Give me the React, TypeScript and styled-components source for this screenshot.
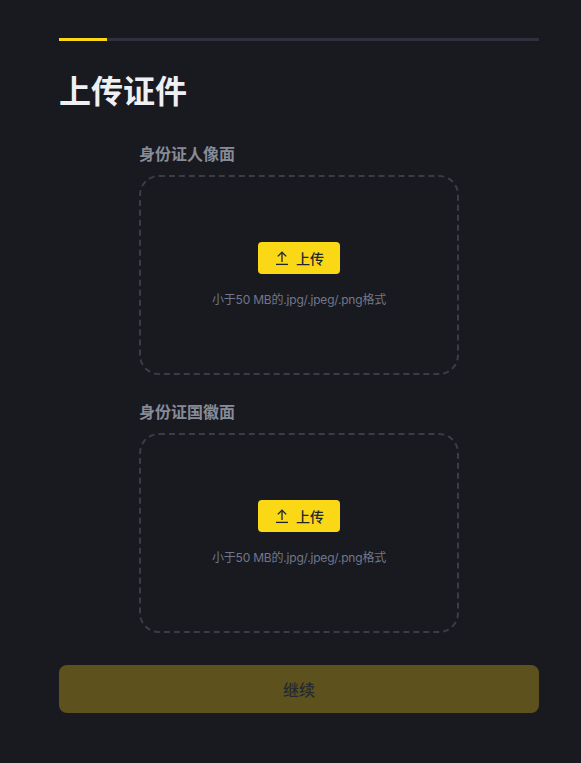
import React from "react"
import styled, { createGlobalStyle } from "styled-components"

const GlobalStyle = createGlobalStyle`
  * {
    box-sizing: border-box;
  }

  body {
    margin: 0;
    background: #191a20;
    font-family: Inter, "Noto Sans CJK SC", sans-serif;
  }
`

const Page = styled.div`
  width: 581px;
  height: 763px;
  padding: 38px 42px 0 59px;
  background: #191a20;
`

const Progress = styled.div`
  height: 3px;
  background: #2e313d;
`

const ProgressFill = styled.div`
  width: 48px;
  height: 100%;
  background: #fad816;
`

const Title = styled.h1`
  margin: 29px 0 0;
  height: 44px;
  font-size: 32px;
  line-height: 44px;
  font-weight: 700;
  color: #eff0f3;
`

const Form = styled.div`
  display: flex;
  flex-direction: column;
  gap: 25px;
  width: 320px;
  margin: 28px auto 0;
`

const Field = styled.div`
  display: flex;
  flex-direction: column;
  gap: 9px;
`

const Label = styled.div`
  height: 24px;
  font-size: 16px;
  line-height: 24px;
  font-weight: 700;
  color: #868b98;
`

const DropZone = styled.div`
  display: flex;
  flex-direction: column;
  align-items: center;
  gap: 17px;
  height: 200px;
  padding-top: 65px;
  border: 2px dashed #3a3c47;
  border-radius: 20px;
`

const UploadButton = styled.button`
  display: flex;
  align-items: center;
  justify-content: center;
  gap: 6px;
  width: 82px;
  height: 32px;
  padding: 0;
  border: 0;
  border-radius: 4px;
  background: #fad816;
  color: #202630;
  font-family: inherit;
  font-size: 14px;
  font-weight: 500;
`

const Hint = styled.div`
  font-size: 12px;
  line-height: 18px;
  letter-spacing: -0.2px;
  color: #70778c;
`

const Submit = styled.button`
  display: block;
  width: 480px;
  height: 48px;
  margin-top: 32px;
  border: 0;
  border-radius: 8px;
  background: #5d521e;
  color: #27292d;
  font-family: inherit;
  font-size: 16px;
  font-weight: 500;
`

function UploadIcon() {
  return (
    <svg width="16" height="16" viewBox="0 0 16 16" fill="none" stroke="currentColor" strokeWidth="1.3">
      <path d="M2 14.4h12" />
      <path d="M8 12V2.4" />
      <path d="M3.8 6.4 8 2.2l4.2 4.2" />
    </svg>
  )
}

function UploadField({ label }: { label: string }) {
  return (
    <Field>
      <Label>{label}</Label>
      <DropZone>
        <UploadButton>
          <UploadIcon />
          上传
        </UploadButton>
        <Hint>小于50 MB的.jpg/.jpeg/.png格式</Hint>
      </DropZone>
    </Field>
  )
}

export default function App() {
  return (
    <Page>
      <GlobalStyle />
      <Progress>
        <ProgressFill />
      </Progress>
      <Title>上传证件</Title>
      <Form>
        <UploadField label="身份证人像面" />
        <UploadField label="身份证国徽面" />
      </Form>
      <Submit>继续</Submit>
    </Page>
  )
}
